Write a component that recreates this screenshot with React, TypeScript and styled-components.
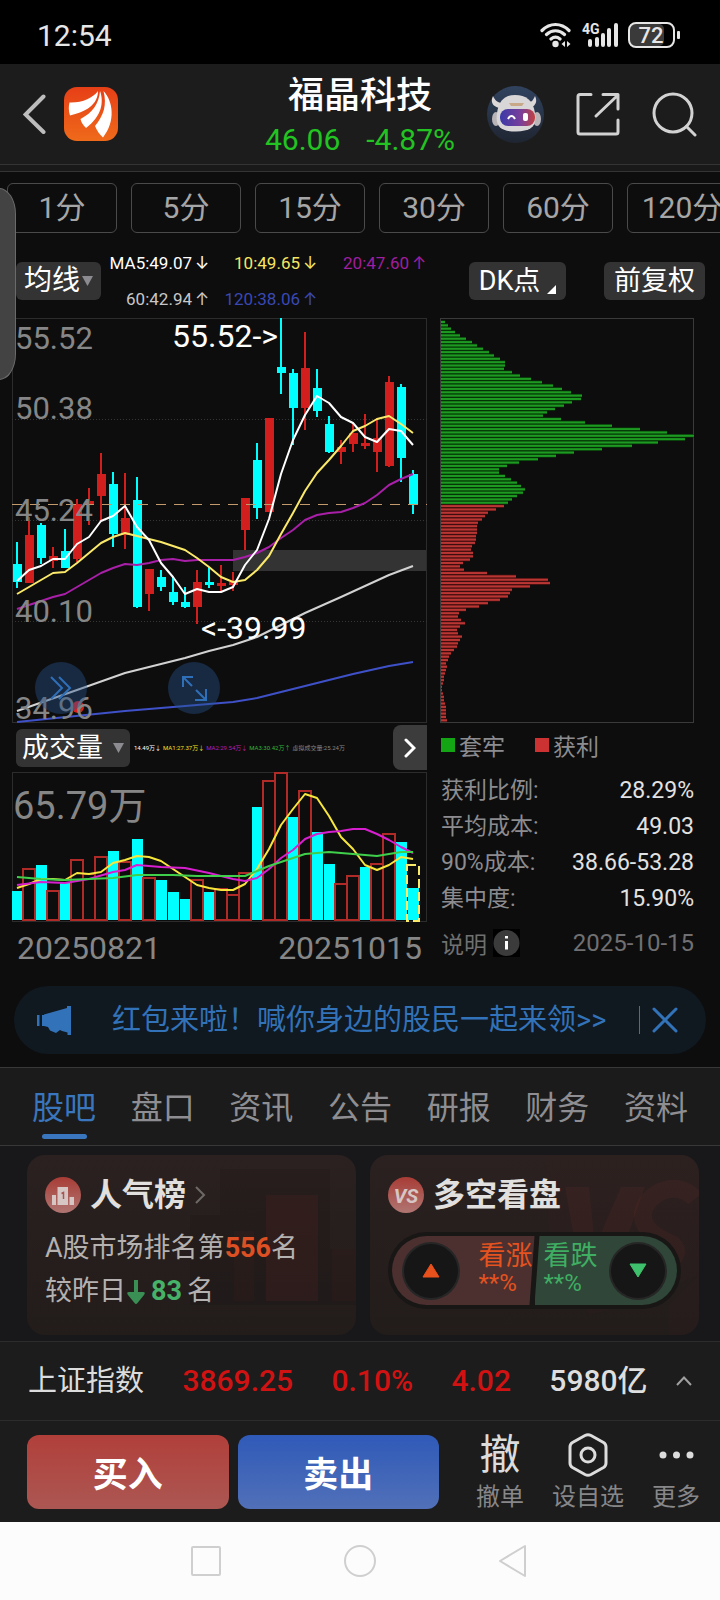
import React from "react";
import styled, { createGlobalStyle } from "styled-components";

const font = `Roboto, "Noto Sans CJK SC", sans-serif`;

const GlobalStyle = createGlobalStyle`
  *, *::before, *::after { box-sizing: border-box; }
  body { margin: 0; background: #0d0d0d; font-family: ${font}; color: #dcdcdc; }
  button { margin: 0; padding: 0; border: 0; background: none; color: inherit; font-family: inherit; cursor: pointer; }
  a { color: inherit; text-decoration: none; }
  svg { display: block; flex: none; }
  h1, h2, p, dl, dd, dt { margin: 0; font-weight: 400; }
`;

/* ---------- market data ---------- */

type Candle = { up: boolean; high: number; top: number; bottom: number; low: number };

const STEP = 12;
const centre = (i: number) => 5 + i * STEP;

const candles: Candle[] = (
  [
    [0, 224, 246, 264, 270], [1, 199, 217, 265, 265], [0, 205, 207, 240, 246], [1, 229, 238, 243, 250],
    [0, 211, 233, 250, 250], [1, 181, 186, 241, 244], [1, 170, 183, 187, 207], [1, 135, 156, 178, 203],
    [0, 154, 166, 216, 229], [1, 155, 200, 217, 231], [0, 159, 182, 289, 290], [1, 251, 251, 276, 293],
    [0, 252, 259, 269, 273], [0, 259, 274, 284, 287], [0, 269, 284, 289, 290], [1, 252, 264, 289, 306],
    [0, 249, 264, 267, 270], [1, 247, 265, 268, 273], [1, 254, 264, 267, 273], [1, 180, 180, 212, 232],
    [0, 125, 142, 190, 201], [1, 100, 100, 194, 194], [0, 0, 49, 55, 76], [0, 51, 55, 90, 127],
    [1, 14, 50, 90, 112], [0, 51, 70, 93, 99], [0, 98, 106, 134, 135], [1, 122, 129, 134, 146],
    [1, 105, 115, 126, 134], [1, 96, 125, 128, 131], [1, 100, 120, 134, 154], [1, 58, 64, 148, 149],
    [0, 66, 69, 140, 164], [0, 152, 156, 186, 196],
  ] as number[][]
).map(([up, high, top, bottom, low]) => ({ up: up === 1, high, top, bottom, low }));

const everyDay = (ys: number[]) => ys.map((y, i) => `${centre(i)},${y}`).join(" ");
const someDays = (ps: number[][]) => ps.map(([i, y]) => `${centre(i)},${y}`).join(" ");

const priceLines = [
  { color: "#d2d2d2", points: someDays([[0, 393], [5, 372], [9, 355], [14, 340], [16, 333], [18, 327], [20, 319], [22, 307], [24, 295], [27, 279], [29, 268], [31, 257], [33, 248]]) },
  { color: "#3f51c8", points: someDays([[0, 404], [9, 393], [16, 386], [18, 384], [20, 380], [22, 374], [25, 365], [28, 356], [31, 348], [33, 344]]) },
  { color: "#a81fa8", points: everyDay([291, 287, 283, 279, 276, 269, 262, 255, 250, 246, 247, 245, 242, 241, 243, 242, 242, 242, 242, 239, 235, 229, 220, 212, 202, 197, 195, 194, 190, 185, 177, 167, 161, 156]) },
  { color: "#fbe96a", points: everyDay([276, 269, 262, 255, 254, 245, 235, 225, 219, 215, 218, 221, 224, 228, 232, 240, 249, 259, 264, 262, 252, 238, 216, 195, 173, 155, 142, 128, 113, 108, 101, 98, 106, 115]) },
  { color: "#ffffff", points: everyDay([263, 252, 248, 241, 241, 226, 219, 203, 198, 188, 209, 222, 245, 259, 276, 271, 274, 274, 269, 247, 232, 201, 156, 122, 97, 78, 85, 99, 105, 119, 124, 111, 113, 127]) },
];

const priceLabels = [
  { text: "55.52", y: 31 },
  { text: "50.38", y: 101 },
  { text: "45.24", y: 203 },
  { text: "40.10", y: 304 },
  { text: "34.96", y: 401 },
];

const volumeTops = [119, 96, 93, 118, 111, 87, 101, 84, 79, 89, 67, 105, 108, 120, 127, 107, 120, 116, 122, 100, 35, 8, 0, 45, 18, 60, 92, 111, 103, 95, 91, 61, 70, 116];
const volumeDown = new Set([0, 2, 4, 8, 10, 12, 13, 14, 16, 20, 23, 25, 26, 29, 32, 33]);

const volumeLines = [
  { color: "#f7e63c", points: everyDay([116, 112, 107, 107, 108, 101, 102, 100, 91, 88, 84, 85, 89, 97, 105, 113, 116, 118, 118, 112, 97, 77, 53, 37, 22, 26, 44, 65, 77, 93, 98, 93, 85, 87]) },
  { color: "#d81fd0", points: someDays([[0, 113], [2, 110], [4, 111], [6, 107], [8, 100], [9, 98], [10, 93], [12, 95], [14, 96], [16, 101], [18, 107], [19, 109], [20, 106], [21, 97], [22, 86], [23, 78], [24, 67], [25, 62], [26, 60], [27, 59], [28, 57], [29, 57], [30, 62], [31, 68], [32, 75], [33, 81]]) },
  { color: "#3fcf4a", points: someDays([[0, 105], [2, 107], [4, 108], [6, 107], [8, 106], [10, 103], [13, 103], [15, 104], [19, 104], [20, 99], [21, 94], [22, 90], [23, 86], [24, 82], [26, 80], [28, 82], [30, 84], [31, 82], [32, 80], [33, 80]]) },
];

const trapped = [4, 7, 10, 14, 19, 25, 31, 36, 42, 48, 53, 59, 64, 64, 63, 71, 79, 90, 101, 112, 121, 130, 141, 140, 131, 123, 114, 106, 102, 120, 144, 171, 199, 226, 253, 244, 217, 191, 161, 133, 115, 97, 78, 66, 58, 58, 64, 70, 76, 80, 84, 82, 76, 71, 67];
const profit = [63, 55, 47, 44, 41, 37, 36, 36, 36, 35, 35, 34, 31, 30, 32, 32, 29, 22, 19, 23, 46, 75, 107, 109, 89, 71, 69, 67, 59, 47, 38, 25, 18, 17, 20, 24, 19, 16, 17, 21, 19, 17, 16, 13, 10, 8, 7, 5, 6, 5, 4, 3, 3, 2, 1, 1, 2, 3, 3, 4, 5, 5, 5, 5, 6];
const chips = [...trapped, ...profit];

const RED = "#d31e1e";
const CYAN = "#00ffff";

/* ---------- shell ---------- */

const Page = styled.div`
  position: relative;
  min-width: 0;
  overflow: hidden;
`;

const StatusBar = styled.div`
  display: flex;
  align-items: center;
  justify-content: space-between;
  height: 64px;
  padding: 6px 40px 0 37px;
  background: #000;
  font-size: 30px;
  color: #e6e6e6;
`;

const StatusIcons = styled.div`
  display: flex;
  align-items: center;
  gap: 9px;
`;

const Header = styled.header`
  display: grid;
  grid-template-columns: 1fr auto 1fr;
  align-items: center;
  height: 101px;
  padding: 0 23px;
  background: #1c1c1c;
  border-bottom: 1px solid #343434;
`;

const HeaderSide = styled.div<{ $end?: boolean }>`
  display: flex;
  align-items: center;
  gap: ${(p) => (p.$end ? 32 : 17)}px;
  justify-content: ${(p) => (p.$end ? "flex-end" : "flex-start")};
  height: 100%;
`;

const IconButton = styled.button`
  display: flex;
  align-items: center;
  justify-content: center;
`;

const Quote = styled.div`
  padding-top: 5px;
  text-align: center;
`;

const StockName = styled.h1`
  font-size: 36px;
  font-weight: 500;
  line-height: 44px;
  color: #fff;
`;

const StockPrice = styled.p`
  display: flex;
  justify-content: center;
  gap: 26px;
  margin-top: 2px;
  font-size: 30px;
  line-height: 40px;
  color: #22c322;
`;

const Strip = styled.div`
  height: 7px;
  background: #191919;
  border-bottom: 1px solid #343434;
`;

const Market = styled.main`
  position: relative;
`;

const DrawerHandle = styled.button`
  position: absolute;
  z-index: 2;
  left: -1px;
  top: 16px;
  width: 17px;
  height: 192px;
  border: 1px solid #6a6a6a;
  border-radius: 0 17px 17px 0 / 0 26px 26px 0;
  background: #434343;
`;

const Periods = styled.nav`
  display: flex;
  gap: 14px;
  padding: 11px 0 0 7px;
  overflow: hidden;
`;

const Period = styled.button`
  flex: 0 0 110px;
  height: 50px;
  border: 1px solid #4a4a4a;
  border-radius: 6px;
  font-size: 30px;
  line-height: 48px;
  color: #a6a6a6;
`;

/* ---------- indicator toolbar ---------- */

const Toolbar = styled.div`
  display: flex;
  align-items: center;
  justify-content: space-between;
  height: 85px;
  padding: 10px 15px 0 16px;
`;

const ToolGroup = styled.div<{ $gap?: number }>`
  display: flex;
  align-items: center;
  gap: ${(p) => p.$gap ?? 0}px;
`;

const Chip = styled.button<{ $width: number; $size?: number; $gap?: number }>`
  display: flex;
  align-items: center;
  justify-content: center;
  gap: ${(p) => p.$gap ?? 2}px;
  width: ${(p) => p.$width}px;
  height: 38px;
  border-radius: 6px;
  background: #333;
  color: #fff;
  font-size: ${(p) => p.$size ?? 27}px;
  line-height: 36px;
`;

const CornerMark = styled.svg`
  align-self: flex-end;
  margin-bottom: 6px;
`;

const Averages = styled.div`
  display: grid;
  grid-template-columns: 107px 108px 109px;
  justify-items: end;
  font-size: 17px;
  line-height: 36px;
`;

const Average = styled.span<{ $color: string }>`
  display: flex;
  align-items: center;
  gap: 3px;
  color: ${(p) => p.$color};
`;

const Arrow = styled.span`
  width: 13px;
  text-align: center;
  font-family: Inter, sans-serif;
`;

/* ---------- charts ---------- */

const Charts = styled.div`
  display: grid;
  grid-template-columns: minmax(0, 415fr) minmax(0, 255fr);
  column-gap: 13px;
  padding: 0 25px 0 12px;
`;

const Chart = styled.svg`
  width: 100%;
  height: auto;
  overflow: visible;
  font-family: ${font};
`;

const PriceChart = styled.div`
  position: relative;
`;

const RoundTool = styled.button<{ $left: string }>`
  position: absolute;
  left: ${(p) => p.$left};
  bottom: 9px;
  display: flex;
  align-items: center;
  justify-content: center;
  width: 52px;
  height: 52px;
  border-radius: 50%;
  background: rgba(38, 84, 140, 0.42);
`;

const VolumeHead = styled.div`
  display: flex;
  align-items: center;
  height: 49px;
  padding-left: 4px;
`;

const VolumeFigures = styled.div`
  display: flex;
  flex: 1;
  gap: 2px;
  padding-left: 4px;
  overflow: hidden;
  white-space: nowrap;
  font-size: 6px;
  line-height: 14px;
`;

const Tint = styled.span<{ $color: string }>`
  color: ${(p) => p.$color};
`;

const NextButton = styled.button`
  display: flex;
  align-items: center;
  justify-content: center;
  width: 34px;
  height: 45px;
  border-radius: 8px 0 0 8px;
  background: #3c3c3c;
`;

const DateRange = styled.div`
  display: flex;
  justify-content: space-between;
  padding: 6px 5px 0;
  font-size: 32px;
  line-height: 40px;
  color: #868686;
`;

const Legend = styled.div`
  display: flex;
  gap: 30px;
  padding-left: 1px;
  height: 43px;
  align-items: center;
  font-size: 23px;
  color: #8c8c90;
`;

const LegendItem = styled.span`
  display: flex;
  align-items: center;
  gap: 4px;
`;

const Swatch = styled.i<{ $color: string }>`
  width: 14px;
  height: 14px;
  background: ${(p) => p.$color};
`;

const Stats = styled.dl`
  padding: 7px 1px 0;
`;

const Stat = styled.div`
  display: flex;
  justify-content: space-between;
  font-size: 23px;
  line-height: 36px;
`;

const StatName = styled.dt`
  color: #8c8c90;
`;

const StatValue = styled.dd`
  color: #e2e2e2;
`;

const Note = styled.div`
  display: flex;
  align-items: center;
  justify-content: space-between;
  padding: 8px 1px 0;
  font-size: 24px;
  line-height: 36px;
  color: #707072;
`;

const InfoButton = styled.button`
  display: flex;
  align-items: center;
  gap: 6px;
  font-size: 23px;
`;

/* ---------- banner and tabs ---------- */

const Banner = styled.aside`
  display: flex;
  align-items: center;
  height: 68px;
  margin: 18px 14px 13px;
  padding: 0 28px 0 22px;
  border-radius: 34px;
  background: #101820;
  color: #3272b8;
`;

const BannerLink = styled.a`
  flex: 1;
  padding-left: 40px;
  white-space: nowrap;
  font-size: 29px;
  line-height: 40px;
`;

const BannerClose = styled.button`
  display: flex;
  align-items: center;
  height: 28px;
  padding-left: 12px;
  border-left: 1px solid #3272b8;
`;

const Tabs = styled.nav`
  display: flex;
  justify-content: space-between;
  height: 79px;
  padding: 0 32px;
  background: #1b1b1b;
  border-top: 1px solid #383838;
  border-bottom: 1px solid #383838;
`;

const Tab = styled.a<{ $active?: boolean }>`
  display: flex;
  flex-direction: column;
  align-items: center;
  padding-top: 16px;
  font-size: 32px;
  line-height: 48px;
  color: ${(p) => (p.$active ? "#3a76bd" : "#8e8e92")};
  &::after {
    content: "";
    width: 45px;
    height: 5px;
    margin-top: 2px;
    border-radius: 3px;
    background: ${(p) => (p.$active ? "#3a76bd" : "transparent")};
  }
`;

/* ---------- cards ---------- */

const Cards = styled.section`
  display: grid;
  grid-template-columns: 1fr 1fr;
  gap: 14px;
  padding: 9px 21px 6px 27px;
  background: #18181a;
`;

const Card = styled.article`
  position: relative;
  height: 180px;
  padding: 18px;
  overflow: hidden;
  border-radius: 18px;
  background: linear-gradient(#2a2120, #221c1b);
`;

const Ghost = styled.svg`
  position: absolute;
  right: 0;
  top: 0;
`;

const CardTitle = styled.h2`
  position: relative;
  display: flex;
  align-items: center;
  gap: 9px;
  font-size: 32px;
  font-weight: 700;
  line-height: 44px;
  color: #e2e0df;
`;

const CardLine = styled.p`
  position: relative;
  display: flex;
  align-items: center;
  margin-top: 1px;
  font-size: 27px;
  line-height: 42px;
  color: #b4b1b0;
  &:first-of-type { margin-top: 10px; }
`;

const Figure = styled.b<{ $color: string; $gap?: number }>`
  margin: 0 ${(p) => p.$gap ?? 0}px;
  color: ${(p) => p.$color};
`;

const Vote = styled.div`
  position: relative;
  display: grid;
  grid-template-columns: 1fr 1fr;
  height: 77px;
  margin: 15px 0 0;
  padding: 4px;
  border-radius: 39px;
  background: #191616;
`;

const VoteSide = styled.button<{ $down?: boolean }>`
  display: flex;
  flex-direction: ${(p) => (p.$down ? "row-reverse" : "row")};
  align-items: center;
  justify-content: space-between;
  padding: ${(p) => (p.$down ? "0 10px 0 9px" : "0 2px 0 10px")};
  text-align: left;
  border-radius: ${(p) => (p.$down ? "0 35px 35px 0" : "35px 0 0 35px")};
  background: ${(p) => (p.$down ? "#2f4638" : "#4b302f")};
  color: ${(p) => (p.$down ? "#3fae63" : "#e4531f")};
  clip-path: ${(p) =>
    p.$down ? "polygon(5px 0, 100% 0, 100% 100%, 0 100%)" : "polygon(0 0, 100% 0, calc(100% - 5px) 100%, 0 100%)"};
`;

const VoteDisc = styled.span`
  display: flex;
  align-items: center;
  justify-content: center;
  width: 58px;
  height: 58px;
  border: 2px solid rgba(255, 255, 255, 0.07);
  border-radius: 50%;
  background: #161616;
`;

const VoteText = styled.span`
  display: flex;
  flex-direction: column;
  width: 54px;
  padding-bottom: 6px;
  font-size: 27px;
  line-height: 30px;
  small { font-size: 24px; line-height: 24px; }
`;

/* ---------- index row, action bar, system bar ---------- */

const IndexRow = styled.section`
  display: flex;
  align-items: center;
  justify-content: space-between;
  height: 80px;
  padding: 0 28px;
  background: #1c1c1c;
  border-top: 1px solid #2c2c2c;
  border-bottom: 1px solid #2c2c2c;
  font-size: 29px;
  line-height: 40px;
`;

const IndexFigure = styled.span<{ $up?: boolean }>`
  font-size: 30px;
  font-weight: 500;
  color: ${(p) => (p.$up ? "#d01212" : "#dedede")};
`;

const IndexToggle = styled(IconButton)`
  margin-left: -10px;
`;

const ActionBar = styled.footer`
  display: flex;
  align-items: center;
  height: 101px;
  padding: 0 20px 0 27px;
  background: #1c1c1c;
`;

const TradeButton = styled.button<{ $sell?: boolean }>`
  flex: 1;
  height: 74px;
  margin-right: 9px;
  border-radius: 12px;
  background: ${(p) => (p.$sell ? "linear-gradient(#2f5ab8, #5170b8)" : "linear-gradient(#b13f3a, #ac5753)")};
  color: #fff;
  font-size: 35px;
  font-weight: 700;
`;

const Actions = styled.div`
  display: flex;
  gap: 28px;
  padding-left: 28px;
`;

const Action = styled.button`
  display: flex;
  flex-direction: column;
  align-items: center;
  font-size: 24px;
  line-height: 34px;
  color: #87878a;
`;

const ActionIcon = styled.span`
  display: flex;
  align-items: center;
  justify-content: center;
  height: 50px;
  font-size: 41px;
  color: #dcdcdc;
`;

const SystemBar = styled.nav`
  display: flex;
  align-items: center;
  justify-content: center;
  gap: 121px;
  height: 78px;
  padding-right: 3px;
  background: #fcfcfc;
`;

/* ---------- drawings ---------- */

const Triangle = () => (
  <svg width="11" height="10" viewBox="0 0 11 10"><path d="M0 0H11L5.500 10Z" fill="#8b8b90" /></svg>
);

const WifiIcon = () => (
  <svg width="32" height="26" viewBox="0 0 32 26" fill="none" stroke="#e6e6e6" strokeWidth="3.200" strokeLinecap="round">
    <path d="M2 8.500C10 0.500 21 0.500 29 8.500M6.500 12.500C12 7.500 19 7.500 24.500 12.500M11 17C14 14.500 17 14.500 20 17" />
    <circle cx="15.500" cy="22" r="3.200" fill="#e6e6e6" stroke="none" />
    <path d="M25 19V25L21.500 22ZM27 19V25L30.500 22Z" fill="#e6e6e6" stroke="none" />
  </svg>
);

const SignalIcon = () => (
  <svg width="38" height="30" viewBox="0 0 38 30" fill="#e6e6e6">
    <text x="1" y="14" fontSize="14" fontWeight="700" fontFamily="Roboto">4G</text>
    <rect x="7" y="19" width="4" height="8" rx="2" />
    <rect x="14" y="17" width="4" height="10" rx="2" />
    <rect x="20" y="13" width="4" height="14" rx="2" />
    <rect x="26" y="8" width="4" height="19" rx="2" />
    <rect x="33" y="3" width="4" height="24" rx="2" />
  </svg>
);

const BatteryIcon = () => (
  <svg width="52" height="26" viewBox="0 0 52 26">
    <rect x="2" y="2" width="34" height="22" rx="5" fill="#3a3a3a" />
    <rect x="1" y="1" width="45" height="24" rx="7" fill="none" stroke="#e6e6e6" strokeWidth="2" />
    <rect x="49" y="9" width="3" height="8" rx="1" fill="#e6e6e6" />
    <text x="23" y="21" textAnchor="middle" fontSize="22" fontWeight="500" fontFamily="Roboto" fill="#e6e6e6">72</text>
  </svg>
);

const BackIcon = () => (
  <svg width="24" height="40" viewBox="0 0 24 40" fill="none" stroke="#bdbdbd" strokeWidth="4" strokeLinecap="round">
    <path d="M20.500 2.500L2.500 20.500L20.500 38" />
  </svg>
);

const AppLogo = () => (
  <svg width="54" height="54" viewBox="0 0 54 54">
    <defs>
      <linearGradient id="logo" x1="0" y1="0" x2="0" y2="1">
        <stop offset="0" stopColor="#e63f17" />
        <stop offset="1" stopColor="#ef6a1a" />
      </linearGradient>
    </defs>
    <rect width="54" height="54" rx="13" fill="url(#logo)" />
    <g fill="#fff">
      <path d="M34 4C34 15 26 24 6 28.500C4.500 24 4.500 19 5.500 15.500C18 16 29 11 34 4Z" />
      <path d="M36 4C40 15 38 29 22 41C19 38 17 35 16.500 32C28 26 35 17 36 4Z" />
      <path d="M39.500 4C49 14 52 34 39 50.500C36 48 33 44 31 39C40 28 43 18 39.500 4Z" />
    </g>
  </svg>
);

const RobotIcon = () => (
  <svg width="57" height="57" viewBox="0 0 57 57">
    <defs>
      <linearGradient id="robotBack" x1="0" y1="0" x2="0" y2="1">
        <stop offset="0" stopColor="#31435f" />
        <stop offset="1" stopColor="#1f2531" />
      </linearGradient>
      <linearGradient id="visor" x1="0" y1="0" x2="1" y2="0">
        <stop offset="0" stopColor="#3a3aa8" />
        <stop offset="0.600" stopColor="#7a3f9a" />
        <stop offset="1" stopColor="#c2413f" />
      </linearGradient>
    </defs>
    <circle cx="28.500" cy="28.500" r="28.500" fill="url(#robotBack)" />
    <path d="M6 10C3 16 6 21 13 22L16 17C10 17 8 14 6 10ZM48 10C51 16 48 21 42 22L39 17C45 17 46 14 48 10Z" fill="#dcd8da" />
    <ellipse cx="9" cy="33" rx="4" ry="7" fill="#b9b4b8" />
    <ellipse cx="50" cy="33" rx="4" ry="7" fill="#b9b4b8" />
    <path d="M10 27C12 14 18 9 28 9C39 9 46 14 48 27C50 41 44 45 29 45.500C14 45.500 8 41 10 27Z" fill="#d9d6d8" />
    <rect x="13" y="23" width="35" height="17" rx="8" fill="url(#visor)" />
    <path d="M22 17H37L35 20H24Z" fill="#c9a888" />
    <path d="M21 33C23 29 26 29 28 33" fill="none" stroke="#fff" strokeWidth="2" />
    <rect x="36" y="27" width="5" height="8" rx="2" fill="#fff" />
  </svg>
);

const ShareIcon = () => (
  <svg width="44" height="44" viewBox="0 0 44 44" fill="none" stroke="#d2d2d2" strokeWidth="3" strokeLinecap="round" strokeLinejoin="round">
    <path d="M15 2.500H4Q2 2.500 2 4.500V40Q2 42 4 42H40Q42 42 42 40V28M27 2.500H42V17M41 4L20 24" />
  </svg>
);

const SearchIcon = () => (
  <svg width="45" height="45" viewBox="0 0 45 45" fill="none" stroke="#d2d2d2" strokeWidth="3" strokeLinecap="round">
    <circle cx="21" cy="21" r="19" />
    <path d="M34.500 34.500L43 43" />
  </svg>
);

const InfoIcon = () => (
  <svg width="27" height="28" viewBox="0 0 27 28">
    <rect width="27" height="28" fill="#000" />
    <circle cx="13.500" cy="14" r="13" fill="#3b3b3b" />
    <path d="M13.500 7V9.500M13.500 12V20.500" stroke="#fff" strokeWidth="3" />
  </svg>
);

const HornIcon = () => (
  <svg width="36" height="30" viewBox="0 0 36 30" fill="#3272b8">
    <path d="M1 10H3.500V21H1ZM6 10H8V21H6ZM8 9.500L31 3V1H35V30H31.500V27.500L26 26L24 25L20 28L14 25.500L12 22L8 21Z" />
  </svg>
);

const RankBadge = () => (
  <svg width="36" height="36" viewBox="0 0 36 36">
    <defs>
      <linearGradient id="badge" x1="0" y1="0" x2="0" y2="1">
        <stop offset="0" stopColor="#a83c36" />
        <stop offset="1" stopColor="#b07672" />
      </linearGradient>
    </defs>
    <circle cx="18" cy="18" r="18" fill="url(#badge)" />
    <path d="M7 18H11V28H7ZM12.500 10H23V28H12.500ZM24.500 20H29V28H24.500Z" fill="#d6c6c4" />
    <path d="M16.500 16.500L18.500 15.500V22" fill="none" stroke="#a85450" strokeWidth="1.500" />
  </svg>
);

const VersusBadge = () => (
  <svg width="36" height="36" viewBox="0 0 36 36">
    <circle cx="18" cy="18" r="18" fill="url(#badge)" />
    <text x="18" y="26" textAnchor="middle" fontFamily="Roboto" fontSize="20" fontWeight="700" fontStyle="italic" fill="#d6c6c4">VS</text>
  </svg>
);

/* ---------- chart components ---------- */

function PricePlot() {
  return (
    <Chart viewBox="0 0 415 405" role="img" aria-label="日K线">
      <rect x="0.500" y="0.500" width="414" height="404" fill="none" stroke="#2c2c2c" />
      {[101, 202, 303].map((y) => (
        <line key={y} x1="0" x2="415" y1={y + 0.5} y2={y + 0.5} stroke="#363636" strokeDasharray="1 2" />
      ))}
      <rect x="221" y="232" width="193" height="21" fill="#333" />
      {candles.map((c, i) => (
        <g key={i} fill={c.up ? RED : CYAN}>
          <rect x={centre(i) - 1} y={c.high} width="2" height={c.low - c.high} />
          <rect x={centre(i) - 4} y={c.top} width="9" height={Math.max(c.bottom - c.top, 2)} />
        </g>
      ))}
      <line x1="0" x2="415" y1="186.500" y2="186.500" stroke="#c39a6b" strokeDasharray="10 8" />
      {priceLines.map((l) => (
        <polyline key={l.color} points={l.points} fill="none" stroke={l.color} strokeWidth="2" strokeLinejoin="round" />
      ))}
      <circle cx="66" cy="389" r="6" fill="#e01f1f" />
      <g fontSize="31" fill="#868686">
        {priceLabels.map((l) => (
          <text key={l.text} x="3" y={l.y}>{l.text}</text>
        ))}
      </g>
      <g fontSize="32" fill="#fff">
        <text x="266" y="29" textAnchor="end">55.52-&gt;</text>
        <text x="189" y="321">&lt;-39.99</text>
      </g>
    </Chart>
  );
}

function VolumePlot() {
  return (
    <Chart viewBox="0 0 415 150" role="img" aria-label="成交量">
      <rect x="0.500" y="0.500" width="414" height="149" fill="none" stroke="#2c2c2c" />
      <text x="1" y="47" fontSize="38" fill="#868686">65.79万</text>
      {volumeTops.map((top, i) =>
        volumeDown.has(i) ? (
          <rect key={i} x={i * STEP} y={top} width="11" height={148 - top} fill={CYAN} />
        ) : (
          <rect key={i} x={i * STEP - 1} y={top + 1} width="12" height={147 - top} fill="none" stroke="#b02a28" strokeWidth="2" />
        )
      )}
      <rect x="395" y="93" width="12" height="56" fill="none" stroke="#fbe96a" strokeWidth="2" strokeDasharray="9 4" />
      {volumeLines.map((l) => (
        <polyline key={l.color} points={l.points} fill="none" stroke={l.color} strokeWidth="2" strokeLinejoin="round" />
      ))}
    </Chart>
  );
}

function ChipPlot() {
  const pitch = 3.347;
  return (
    <Chart viewBox="0 0 255 405" role="img" aria-label="筹码分布">
      <rect x="0.500" y="0.500" width="253" height="404" fill="none" stroke="#3a3a3a" />
      {chips.map((w, i) => {
        const green = i < trapped.length;
        const y = 2.3 + i * pitch;
        return (
          <g key={i}>
            <rect x="1" y={y} width={w} height={pitch} fill={green ? "#063f08" : "#4f1010"} />
            <rect x="1" y={y + 0.7} width={w} height="2" fill={green ? "#1e9a22" : "#b83634"} />
          </g>
        );
      })}
    </Chart>
  );
}

/* ---------- page ---------- */

const averages = [
  { text: "MA5:49.07", arrow: "↓", color: "#fff" },
  { text: "10:49.65", arrow: "↓", color: "#f5e663" },
  { text: "20:47.60", arrow: "↑", color: "#a01ea0" },
  { text: "60:42.94", arrow: "↑", color: "#c8c8c8" },
  { text: "120:38.06", arrow: "↑", color: "#3a48b4" },
];

const stats = [
  ["获利比例:", "28.29%"],
  ["平均成本:", "49.03"],
  ["90%成本:", "38.66-53.28"],
  ["集中度:", "15.90%"],
];

export default function App() {
  return (
    <Page>
      <GlobalStyle />
      <StatusBar>
        <span>12:54</span>
        <StatusIcons>
          <WifiIcon />
          <SignalIcon />
          <BatteryIcon />
        </StatusIcons>
      </StatusBar>

      <Header>
        <HeaderSide>
          <IconButton aria-label="返回"><BackIcon /></IconButton>
          <AppLogo />
        </HeaderSide>
        <Quote>
          <StockName>福晶科技</StockName>
          <StockPrice><span>46.06</span><span>-4.87%</span></StockPrice>
        </Quote>
        <HeaderSide $end>
          <IconButton aria-label="智能助手"><RobotIcon /></IconButton>
          <IconButton aria-label="分享"><ShareIcon /></IconButton>
          <IconButton aria-label="搜索"><SearchIcon /></IconButton>
        </HeaderSide>
      </Header>
      <Strip />

      <Market>
        <DrawerHandle aria-label="展开侧栏" />
        <Periods>
          {["1分", "5分", "15分", "30分", "60分", "120分"].map((p) => (
            <Period key={p}>{p}</Period>
          ))}
        </Periods>

        <Toolbar>
          <ToolGroup>
            <Chip $width={85} $size={28}>均线<Triangle /></Chip>
            <Averages>
              {averages.map((a) => (
                <Average key={a.text} $color={a.color}>{a.text}<Arrow>{a.arrow}</Arrow></Average>
              ))}
            </Averages>
          </ToolGroup>
          <ToolGroup $gap={38}>
            <Chip $width={97} $gap={7}>
              DK点
              <CornerMark width="9" height="9" viewBox="0 0 9 9"><path d="M9 0V9H0Z" fill="#fff" /></CornerMark>
            </Chip>
            <Chip $width={101}>前复权</Chip>
          </ToolGroup>
        </Toolbar>

        <Charts>
          <div>
            <PriceChart>
              <PricePlot />
              <RoundTool $left="23px" aria-label="快进">
                <svg width="22" height="24" viewBox="0 0 22 24" fill="none" stroke="#2f6fb8" strokeWidth="2">
                  <path d="M1 1L12 12L1 23M9 1L20 12L9 23" />
                </svg>
              </RoundTool>
              <RoundTool $left="156px" aria-label="全屏">
                <svg width="28" height="28" viewBox="0 0 28 28" fill="none" stroke="#2f6fb8" strokeWidth="2">
                  <path d="M3 13V3H13M3 3L12 12M15 26H26V15M26 26L16 16" />
                </svg>
              </RoundTool>
            </PriceChart>
            <VolumeHead>
              <Chip $width={114} $gap={10}>成交量<Triangle /></Chip>
              <VolumeFigures>
                <Tint $color="#fff">14.49万↓</Tint>
                <Tint $color="#f5e01e">MA1:27.37万↓</Tint>
                <Tint $color="#b41eb4">MA2:29.54万↓</Tint>
                <Tint $color="#32b43c">MA3:30.42万↑</Tint>
                <Tint $color="#868686">虚拟成交量:25.24万</Tint>
              </VolumeFigures>
              <NextButton aria-label="下一项">
                <svg width="12" height="20" viewBox="0 0 12 20" fill="none" stroke="#fff" strokeWidth="3" strokeLinecap="round">
                  <path d="M2 2L10 10L2 18" />
                </svg>
              </NextButton>
            </VolumeHead>
            <VolumePlot />
            <DateRange><span>20250821</span><span>20251015</span></DateRange>
          </div>

          <div>
            <ChipPlot />
            <Legend>
              <LegendItem><Swatch $color="#14a514" />套牢</LegendItem>
              <LegendItem><Swatch $color="#cd3232" />获利</LegendItem>
            </Legend>
            <Stats>
              {stats.map(([name, value]) => (
                <Stat key={name}><StatName>{name}</StatName><StatValue>{value}</StatValue></Stat>
              ))}
            </Stats>
            <Note>
              <InfoButton>说明<InfoIcon /></InfoButton>
              <span>2025-10-15</span>
            </Note>
          </div>
        </Charts>

        <Banner>
          <HornIcon />
          <BannerLink href="#invite">红包来啦！喊你身边的股民一起来领&gt;&gt;</BannerLink>
          <BannerClose aria-label="关闭">
            <svg width="26" height="26" viewBox="0 0 26 26" fill="none" stroke="#3272b8" strokeWidth="3" strokeLinecap="round">
              <path d="M2 2L24 24M24 2L2 24" />
            </svg>
          </BannerClose>
        </Banner>
      </Market>

      <Tabs>
        {["股吧", "盘口", "资讯", "公告", "研报", "财务", "资料"].map((t, i) => (
          <Tab key={t} href={`#tab${i}`} $active={i === 0}>{t}</Tab>
        ))}
      </Tabs>

      <Cards>
        <Card>
          <Ghost width="166" height="150" viewBox="0 0 166 150">
            <path d="M0 60H30V14H140V94H166V150H0Z" fill="rgba(0,0,0,0.07)" />
            <path d="M76 40H128V146H76Z" fill="rgba(150,50,40,0.11)" />
            <path d="M44 76H64V146H44ZM142 94H166V146H142Z" fill="rgba(150,50,40,0.05)" />
          </Ghost>
          <CardTitle>
            <RankBadge />人气榜
            <svg width="11" height="18" viewBox="0 0 11 18" fill="none" stroke="#6e6968" strokeWidth="2"><path d="M1 1L9 9L1 17" /></svg>
          </CardTitle>
          <CardLine>A股市场排名第<Figure $color="#dc5023">556</Figure>名</CardLine>
          <CardLine>
            较昨日
            <svg width="20" height="30" viewBox="0 0 20 30"><path d="M8 4H12V16H17Q20 16 18 19L11.500 27Q10 29 8.500 27L2 19Q0 16 3 16H8Z" fill="#3a8f55" /></svg>
            <Figure $color="#46b168" $gap={5}>83</Figure>名
          </CardLine>
        </Card>
        <Card>
          <Ghost width="170" height="180" viewBox="0 0 170 180">
            <path d="M16 0H170V180H140V150L170 120L100 150L60 160L20 80Z" fill="rgba(120,50,40,0.04)" />
            <path d="M36 32H60L66 92L92 32H116L84 122H52Z" fill="rgba(150,50,40,0.09)" />
            <path d="M166 44C150 24 118 36 114 58C112 76 132 84 144 90C150 96 146 104 138 106C126 108 118 102 112 96" fill="none" stroke="rgba(150,50,40,0.09)" strokeWidth="18" />
          </Ghost>
          <CardTitle><VersusBadge />多空看盘</CardTitle>
          <Vote>
            <VoteSide>
              <VoteDisc><svg width="18" height="15" viewBox="0 0 18 15"><path d="M9 1L17 14H1Z" fill="#e8501c" stroke="#e8501c" strokeWidth="1" strokeLinejoin="round" /></svg></VoteDisc>
              <VoteText>看涨<small>**%</small></VoteText>
            </VoteSide>
            <VoteSide $down>
              <VoteDisc><svg width="18" height="15" viewBox="0 0 18 15"><path d="M9 14L17 1H1Z" fill="#3fc06c" stroke="#3fc06c" strokeWidth="1" strokeLinejoin="round" /></svg></VoteDisc>
              <VoteText>看跌<small>**%</small></VoteText>
            </VoteSide>
          </Vote>
        </Card>
      </Cards>

      <IndexRow>
        <span>上证指数</span>
        <IndexFigure $up>3869.25</IndexFigure>
        <IndexFigure $up>0.10%</IndexFigure>
        <IndexFigure $up>4.02</IndexFigure>
        <IndexFigure>5980亿</IndexFigure>
        <IndexToggle aria-label="展开指数">
          <svg width="16" height="10" viewBox="0 0 16 10" fill="none" stroke="#a0a0a0" strokeWidth="2"><path d="M1 9L8 1.500L15 9" /></svg>
        </IndexToggle>
      </IndexRow>

      <ActionBar>
        <TradeButton>买入</TradeButton>
        <TradeButton $sell>卖出</TradeButton>
        <Actions>
          <Action><ActionIcon>撤</ActionIcon>撤单</Action>
          <Action>
            <ActionIcon>
              <svg width="40" height="44" viewBox="0 0 40 44" fill="none" stroke="#dcdcdc" strokeWidth="3" strokeLinejoin="round">
                <path d="M17 2.500Q20 1 23 2.500L35.500 9.500Q38 11 38 14V30Q38 33 35.500 34.500L23 41.500Q20 43 17 41.500L4.500 34.500Q2 33 2 30V14Q2 11 4.500 9.500Z" />
                <circle cx="20" cy="22" r="7" />
              </svg>
            </ActionIcon>
            设自选
          </Action>
          <Action>
            <ActionIcon>
              <svg width="35" height="8" viewBox="0 0 35 8" fill="#dcdcdc"><circle cx="4" cy="4" r="3.500" /><circle cx="17.500" cy="4" r="3.500" /><circle cx="31" cy="4" r="3.500" /></svg>
            </ActionIcon>
            更多
          </Action>
        </Actions>
      </ActionBar>

      <SystemBar>
        <IconButton aria-label="最近任务">
          <svg width="32" height="32" viewBox="0 0 32 32" fill="none" stroke="#cfcfcf" strokeWidth="2"><rect x="2" y="2" width="28" height="28" rx="1" /></svg>
        </IconButton>
        <IconButton aria-label="主屏幕">
          <svg width="34" height="34" viewBox="0 0 34 34" fill="none" stroke="#cfcfcf" strokeWidth="2"><circle cx="17" cy="17" r="15" /></svg>
        </IconButton>
        <IconButton aria-label="系统返回">
          <svg width="30" height="34" viewBox="0 0 30 34" fill="none" stroke="#cfcfcf" strokeWidth="2" strokeLinejoin="round"><path d="M27 2V32L2 17Z" /></svg>
        </IconButton>
      </SystemBar>
    </Page>
  );
}
